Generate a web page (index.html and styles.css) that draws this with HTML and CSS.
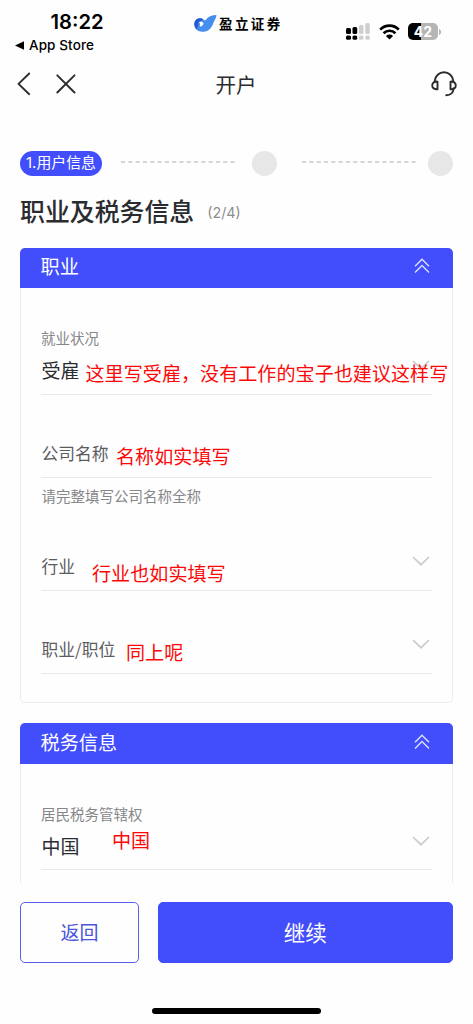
FILE: index.html
```html
<!DOCTYPE html>
<html lang="zh-CN">
<head>
<meta charset="utf-8">
<meta name="viewport" content="width=device-width, initial-scale=1">
<title>开户</title>
<link rel="stylesheet" href="styles.css">
</head>
<body>
<div class="screen">
  <header class="status">
    <div class="status-left">
      <div class="time">18:22</div>
      <div class="back-app"><svg width="9" height="9" viewBox="0 0 9 9"><path d="M9 .3v8.400L0 4.500z"/></svg><span>App Store</span></div>
    </div>
    <div class="brand">
      <svg width="23" height="18" viewBox="0 0 23 18">
        <path fill="#438eee" d="M22.500 0C18 .4 15 1 13 3.500c-1 1.300-1.200 2-2.800 1.700C8.500 2.700 5 2.500 2.500 4.500.3 6.300-.1 9.500 1 12.200c1.300 3.300 4.800 5 8.600 4.600 4.700-.5 8.200-3.800 9.500-8.300.8-2.500 3-4.500 3.400-8.500z"/>
        <path fill="#2259cf" d="M9.500 4.500C7 2.900 4.200 3 2.300 4.600.2 6.300-.1 9.300.8 11.700c.7 1.600 1.600 2.500 2.800 2.900-.8-1.600-.5-2.800.7-3.900L4 7.600z"/>
        <path fill="#fff" d="M5 7.100l2.600-.6 1.900 1.600-.5 2-2.200 1.600-1.200-1.200.7-1.500z"/>
      </svg>
      <span>盈立证券</span>
    </div>
    <div class="status-right">
      <svg width="25" height="17" viewBox="0 0 25 17">
        <g fill="#000"><rect x="0" y="5" width="5" height="6" rx="1.500"/><rect x="6.500" y="4" width="4.700" height="7" rx="1.500"/><rect x="0" y="12.500" width="5" height="4.300" rx="1.500"/><rect x="6.500" y="12.500" width="4.700" height="4.300" rx="1.500"/></g>
        <g fill="#cfcfcf"><rect x="13" y="2" width="4.500" height="9" rx="1.500"/><rect x="19.300" y="0" width="4.500" height="11" rx="1.500"/><rect x="13" y="12.500" width="4.500" height="4.300" rx="1.500"/><rect x="19.300" y="12.500" width="4.500" height="4.300" rx="1.500"/></g>
      </svg>
      <svg class="wifi" width="21" height="16" viewBox="0 0 21 16"><g fill="none" stroke="#000" stroke-width="2.700"><path d="M1.200 5.600a13 13 0 0 1 18.600 0"/><path d="M4.600 9.200a8.300 8.300 0 0 1 11.800 0"/></g><path d="M10.500 15.600L6.900 12a5.200 5.200 0 0 1 7.200 0z"/></svg>
      <div class="battery"><span>42</span></div>
      <svg class="cap" width="3" height="6" viewBox="0 0 3 6"><path fill="#b5b5b5" d="M0 0c2.800.8 2.800 5.200 0 6z"/></svg>
    </div>
  </header>

  <nav class="nav">
    <div class="nav-left">
      <svg width="14" height="24" viewBox="0 0 14 24"><path class="stroke" d="M12.200 1.500L1.500 11.900l10.700 10.300"/></svg>
      <svg width="20" height="20" viewBox="0 0 20 20"><path class="stroke" d="M1.300 1.300l17.200 17.200M18.500 1.300L1.300 18.500"/></svg>
    </div>
    <h1>开户</h1>
    <svg class="headset" width="26" height="26" viewBox="0 0 26 26"><g class="stroke"><path d="M3.800 11V9.800C4.300 5 8 1.300 13 1.300S21.800 5 22.200 9.800V11"/><path d="M6.500 10.600v7.600c-3 .3-5.300-1.200-5.300-3.800s2.300-4.200 5.300-3.800z"/><path d="M19.500 10.600v7.600c3 .3 5.300-1.200 5.300-3.800s-2.300-4.200-5.300-3.800z"/><path d="M22.500 17.500c0 4-2.800 6.700-7.300 6.700"/></g></svg>
  </nav>

  <div class="steps">
    <span class="pill">1.用户信息</span>
    <svg class="dash first" width="116" height="2" viewBox="0 0 116 2"><path d="M0 1h116"/></svg>
    <i class="dot"></i>
    <svg class="dash second" width="116" height="2" viewBox="0 0 116 2"><path d="M0 1h116"/></svg>
    <i class="dot last"></i>
  </div>

  <div class="title"><h2>职业及税务信息</h2><span>(2/4)</span></div>

  <main class="cards">
    <section class="card">
      <div class="card-head"><span>职业</span><svg width="16" height="16" viewBox="0 0 16 16"><path d="M1 8.200l7-7 7 7M1 14.500l7-7 7 7"/></svg></div>
      <div class="card-body">
        <div class="field tall">
          <div class="caption">就业状况</div>
          <div class="row value"><span>受雇</span><svg class="chev" width="18" height="10" viewBox="0 0 18 10"><path d="M1 1l8 7.700L17 1"/></svg></div>
          <div class="note note-employed">这里写受雇，没有工作的宝子也建议这样写</div>
        </div>
        <div class="field">
          <div class="row"><span>公司名称</span></div>
          <div class="note note-company">名称如实填写</div>
        </div>
        <div class="hint">请完整填写公司名称全称</div>
        <div class="field">
          <div class="row"><span>行业</span><svg class="chev" width="18" height="10" viewBox="0 0 18 10"><path d="M1 1l8 7.700L17 1"/></svg></div>
          <div class="note note-industry">行业也如实填写</div>
        </div>
        <div class="field">
          <div class="row"><span>职业/职位</span><svg class="chev" width="18" height="10" viewBox="0 0 18 10"><path d="M1 1l8 7.700L17 1"/></svg></div>
          <div class="note note-job">同上呢</div>
        </div>
      </div>
    </section>
    <section class="card">
      <div class="card-head"><span>税务信息</span><svg width="16" height="16" viewBox="0 0 16 16"><path d="M1 8.200l7-7 7 7M1 14.500l7-7 7 7"/></svg></div>
      <div class="card-body">
        <div class="field tall">
          <div class="caption">居民税务管辖权</div>
          <div class="row value"><span>中国</span><svg class="chev" width="18" height="10" viewBox="0 0 18 10"><path d="M1 1l8 7.700L17 1"/></svg></div>
          <div class="note note-country">中国</div>
        </div>
      </div>
    </section>
  </main>

  <footer class="actions">
    <button class="btn ghost">返回</button>
    <button class="btn primary">继续</button>
  </footer>
  <div class="home"></div>
</div>
</body>
</html>
```
FILE: styles.css
```css
* { box-sizing: border-box; }
body {
  margin: 0;
  background: #fefefe;
  color: #2b2c30;
  font-family: "Noto Sans CJK SC", sans-serif;
}
svg { display: block; flex: none; }
h1, h2 { margin: 0; font-weight: 400; }
.screen { width: 473px; height: 1024px; overflow: hidden; display: flex; flex-direction: column; }

.status { height: 60px; flex: none; display: grid; grid-template-columns: 193.500px 1fr auto; padding-right: 31px; align-items: start; color: #000; font-family: Inter, "Noto Sans CJK SC", sans-serif; }
.time { margin: 10px 0 0 50.500px; font-size: 20.200px; line-height: 24px; font-weight: 600; }
.back-app { display: flex; align-items: center; gap: 5px; margin: 2px 0 0 15px; font-size: 13.500px; line-height: 18px; font-weight: 500; letter-spacing: .1px; }
.brand { display: flex; align-items: center; gap: 2.500px; margin-top: 15px; height: 18px; font-size: 13.500px; line-height: 18px; font-weight: 700; letter-spacing: 2.400px; }
.status-right { display: flex; align-items: center; margin-top: 23px; height: 17px; }
.wifi { margin-left: 8px; }
.battery { width: 30px; height: 17px; margin-left: 8px; border-radius: 5px; background: linear-gradient(90deg, #000 42%, #b5b5b5 42%); color: #fff; font-size: 14px; line-height: 17px; font-weight: 700; text-align: center; }
.cap { margin-left: 1px; }

.nav { height: 48px; flex: none; display: grid; grid-template-columns: 1fr auto 1fr; align-items: center; padding: 0 16px 0 17px; }
.nav-left { display: flex; align-items: center; gap: 25px; }
.nav h1 { margin-left: -2px; font-size: 20.500px; line-height: 28px; }
.headset { justify-self: end; }
.stroke { fill: none; stroke: #2b2c30; stroke-width: 1.900; stroke-linecap: round; stroke-linejoin: round; }

.steps { height: 25px; flex: none; margin: 43px 20px 0; display: flex; align-items: center; }
.pill { width: 82px; height: 25px; border-radius: 13px; background: #424efc; color: #fff; font-family: Inter, "Noto Sans CJK SC", sans-serif; font-size: 14.900px; line-height: 25px; text-align: center; white-space: nowrap; }
.dash { margin-bottom: 4px; }
.dash path { stroke: #c9c9c9; stroke-width: 1.300; stroke-dasharray: 4.200 3.100; }
.first { margin-left: 18.500px; }
.second { margin-left: 25px; }
.dot { width: 25px; height: 25px; margin-left: 15.500px; border-radius: 50%; background: #e7e7e7; }
.last { margin-left: auto; }

.title { height: 36px; flex: none; margin: 16px 20px 0; display: flex; align-items: center; gap: 13px; }
.title h2 { font-size: 24.900px; line-height: 36px; font-weight: 500; }
.title span { margin-top: 6px; color: #8e8e8e; font-size: 14.300px; line-height: 20px; font-family: Inter, sans-serif; }

.cards { height: 635px; flex: none; margin-top: 19.500px; padding: 0 20px; overflow: hidden; }
.card { height: 455.500px; margin-bottom: 20px; border-radius: 5px; }
.card-head { height: 40.500px; padding: 0 23px 3px 20.500px; display: flex; align-items: center; justify-content: space-between; background: #424efc; color: #fff; border-radius: 5px 5px 0 0; font-size: 19.200px; line-height: 28px; }
.card-head svg path { fill: none; stroke: #dfe1ff; stroke-width: 1.400; }
.card-body { height: 415px; padding: 0 20px; border: 1px solid #ececee; border-width: 0 1px 1.500px; border-radius: 0 0 5px 5px; }
.field { position: relative; height: 83px; display: flex; flex-direction: column; justify-content: flex-end; padding-bottom: 11.500px; border-bottom: 1px solid #e8e8ea; }
.tall { height: 106.500px; }
.caption { color: #87878a; font-size: 14.500px; line-height: 20px; margin-bottom: 10px; }
.row { height: 24px; display: flex; align-items: center; justify-content: space-between; padding-left: .5px; color: #5b5c61; font-size: 16.800px; line-height: 24px; }
.value { color: #2b2c30; font-size: 19px; }
.chev { margin: -10px 2px 0 0; }
.chev path { fill: none; stroke: #cbcbcd; stroke-width: 1.700; }
.hint { color: #87878a; height: 30px; padding: 8.500px 0 0 .5px; font-size: 14.500px; line-height: 20px; }

/* Red remarks laid over the form */
.note { position: absolute; color: #fd0808; font-size: 19.100px; line-height: 26px; white-space: nowrap; }
.note-employed { left: 44.500px; bottom: 7.500px; }
.note-company { left: 75px; bottom: 7.500px; }
.note-industry { left: 51px; bottom: 4px; }
.note-job { left: 85px; bottom: 8px; }
.note-country { left: 71px; bottom: 16.500px; }

.actions { flex: none; height: 60.500px; margin: 19.500px 20px 0; display: grid; grid-template-columns: 119px 1fr; gap: 18.500px; }
.btn { padding: 0 0 1px; border: 1px solid #5961e2; border-radius: 5px; font-family: inherit; }
.ghost { background: #fefefe; color: #4b54dd; font-size: 19px; }
.primary { background: #424efc; border-color: #424efc; color: #fff; font-size: 21.500px; }
.home { flex: none; width: 169px; height: 6px; margin: 45px auto 0; border-radius: 3px; background: #000; }
```
